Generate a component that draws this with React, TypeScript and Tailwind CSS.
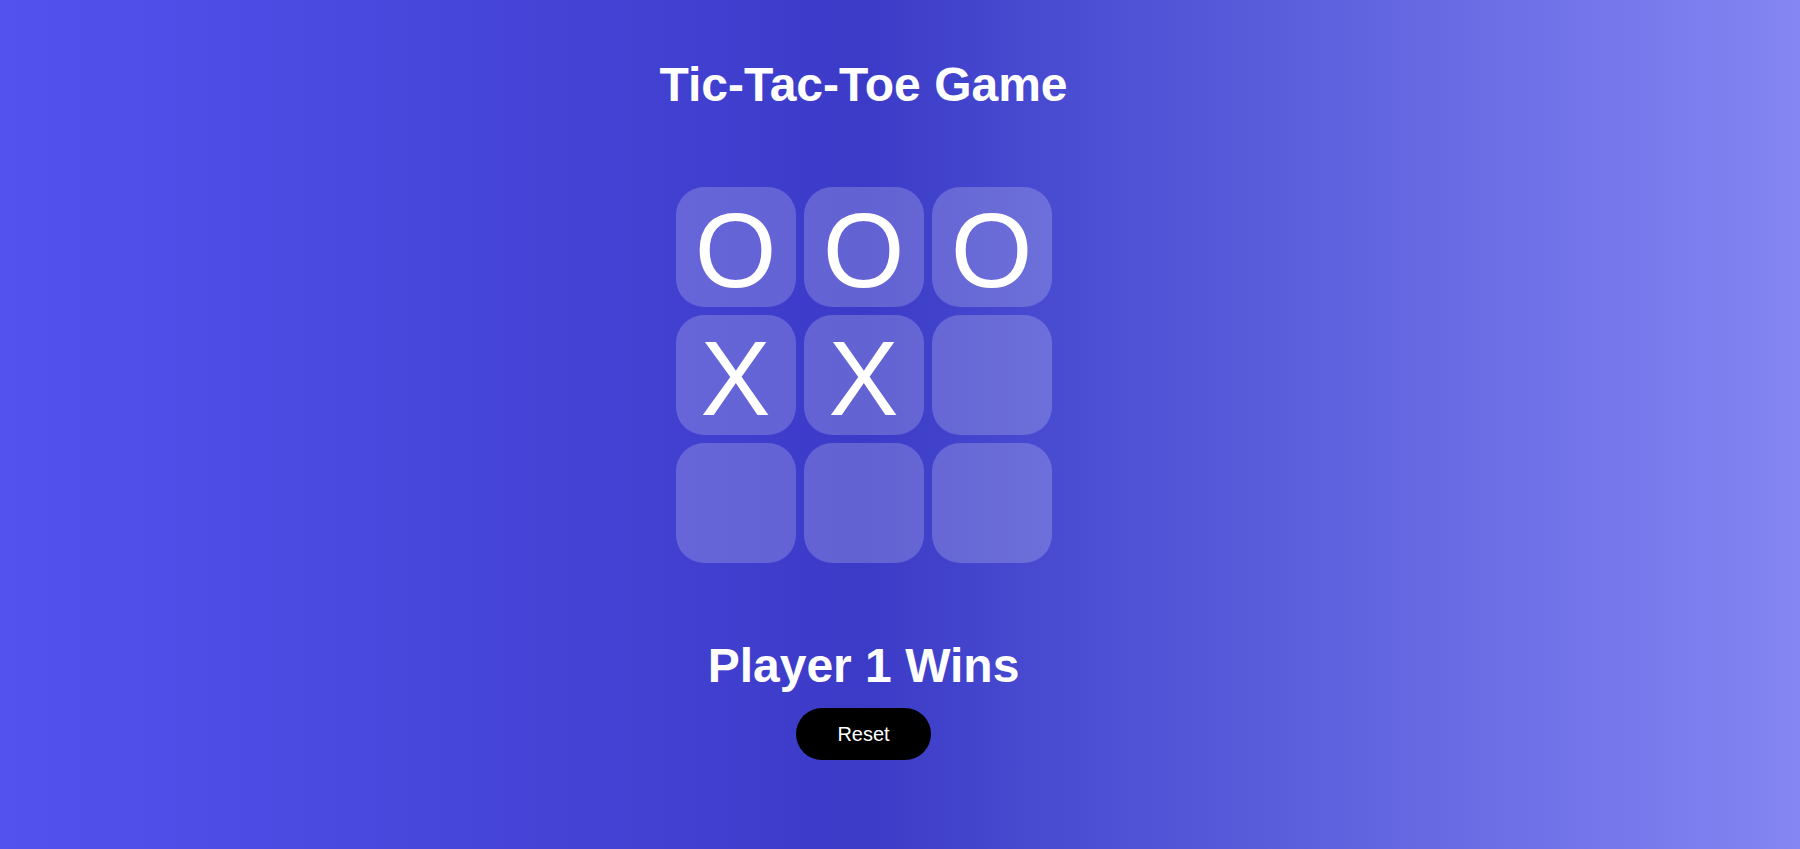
import React, { useState } from "react";

type Mark = "X" | "O" | null;

const start: Mark[] = ["O", "O", "O", "X", "X", null, null, null, null];

export default function App() {
    const [board, setBoard] = useState<Mark[]>(start);

    return (
        <div className="min-h-screen w-full bg-gradient-to-r from-[#5352ef] via-[#3c3bc8] via-48% to-[#8585f3] font-['Liberation_Sans',Arial,sans-serif] text-white">
            <div className="flex flex-col items-center pr-[73px] pt-[61px]">
                <h1 className="text-[48px] leading-none font-bold">Tic-Tac-Toe Game</h1>

                {/* board */}
                <div className="mt-[78px] grid grid-cols-3 gap-2">
                    {board.map((cell, i) => (
                        <button
                            key={i}
                            className="flex h-[120px] w-[120px] items-center justify-center rounded-[28px] bg-white/20 pt-1.5 text-[105px] leading-none"
                            onClick={() => {
                                const next = [...board];
                                next[i] = cell ? cell : "X";
                                setBoard(next);
                            }}
                        >
                            {cell}
                        </button>
                    ))}
                </div>

                <h2 className="mt-[79px] text-[48px] leading-none font-bold">Player 1 Wins</h2>
                <button
                    className="mt-[18px] h-[52px] w-[135px] rounded-full bg-black text-[20px] text-white"
                    onClick={() => setBoard(Array(9).fill(null))}
                >
                    Reset
                </button>
            </div>
        </div>
    );
}
